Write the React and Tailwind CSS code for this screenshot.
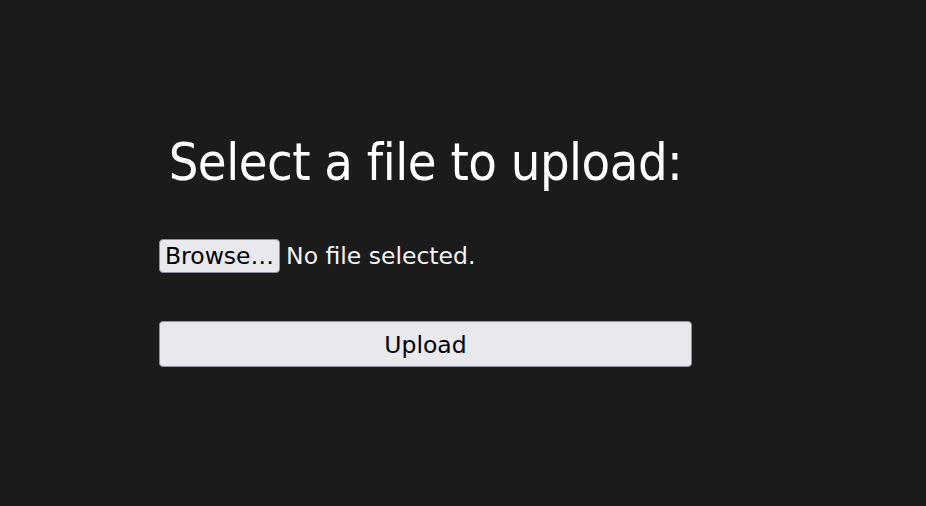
import React from "react";

export default function App() {
  return (
    <div className="min-h-[506px] w-full bg-[#1c1b1b] text-white" style={{ fontFamily: "'DejaVu Sans', sans-serif" }}>
      <div className="ml-[159px] w-[533px] pt-[126px]">
        <h1 className="text-center text-[52px] leading-[72px] font-normal tracking-[-0.5px] text-white [font-family:'DejaVu_Sans_Condensed','Roboto',sans-serif]">
          Select a file to upload:
        </h1>
        <div className="mt-[41px] flex items-center gap-[6px]">
          <button className="h-[34px] rounded-[4px] border border-[#8f8f9d] bg-[#e9e9ed] px-[5px] pt-[2px] text-[23.5px] leading-none text-black">
            Browse…
          </button>
          <span className="pt-[2px] text-[23.5px] leading-none text-[#f5f5f5]">No file selected.</span>
        </div>
        <button className="mt-[48px] h-[46px] w-[533px] rounded-[4px] border border-[#8f8f9d] bg-[#e9e9ed] pt-[3px] text-[23.5px] text-black">
          Upload
        </button>
      </div>
    </div>
  );
}
